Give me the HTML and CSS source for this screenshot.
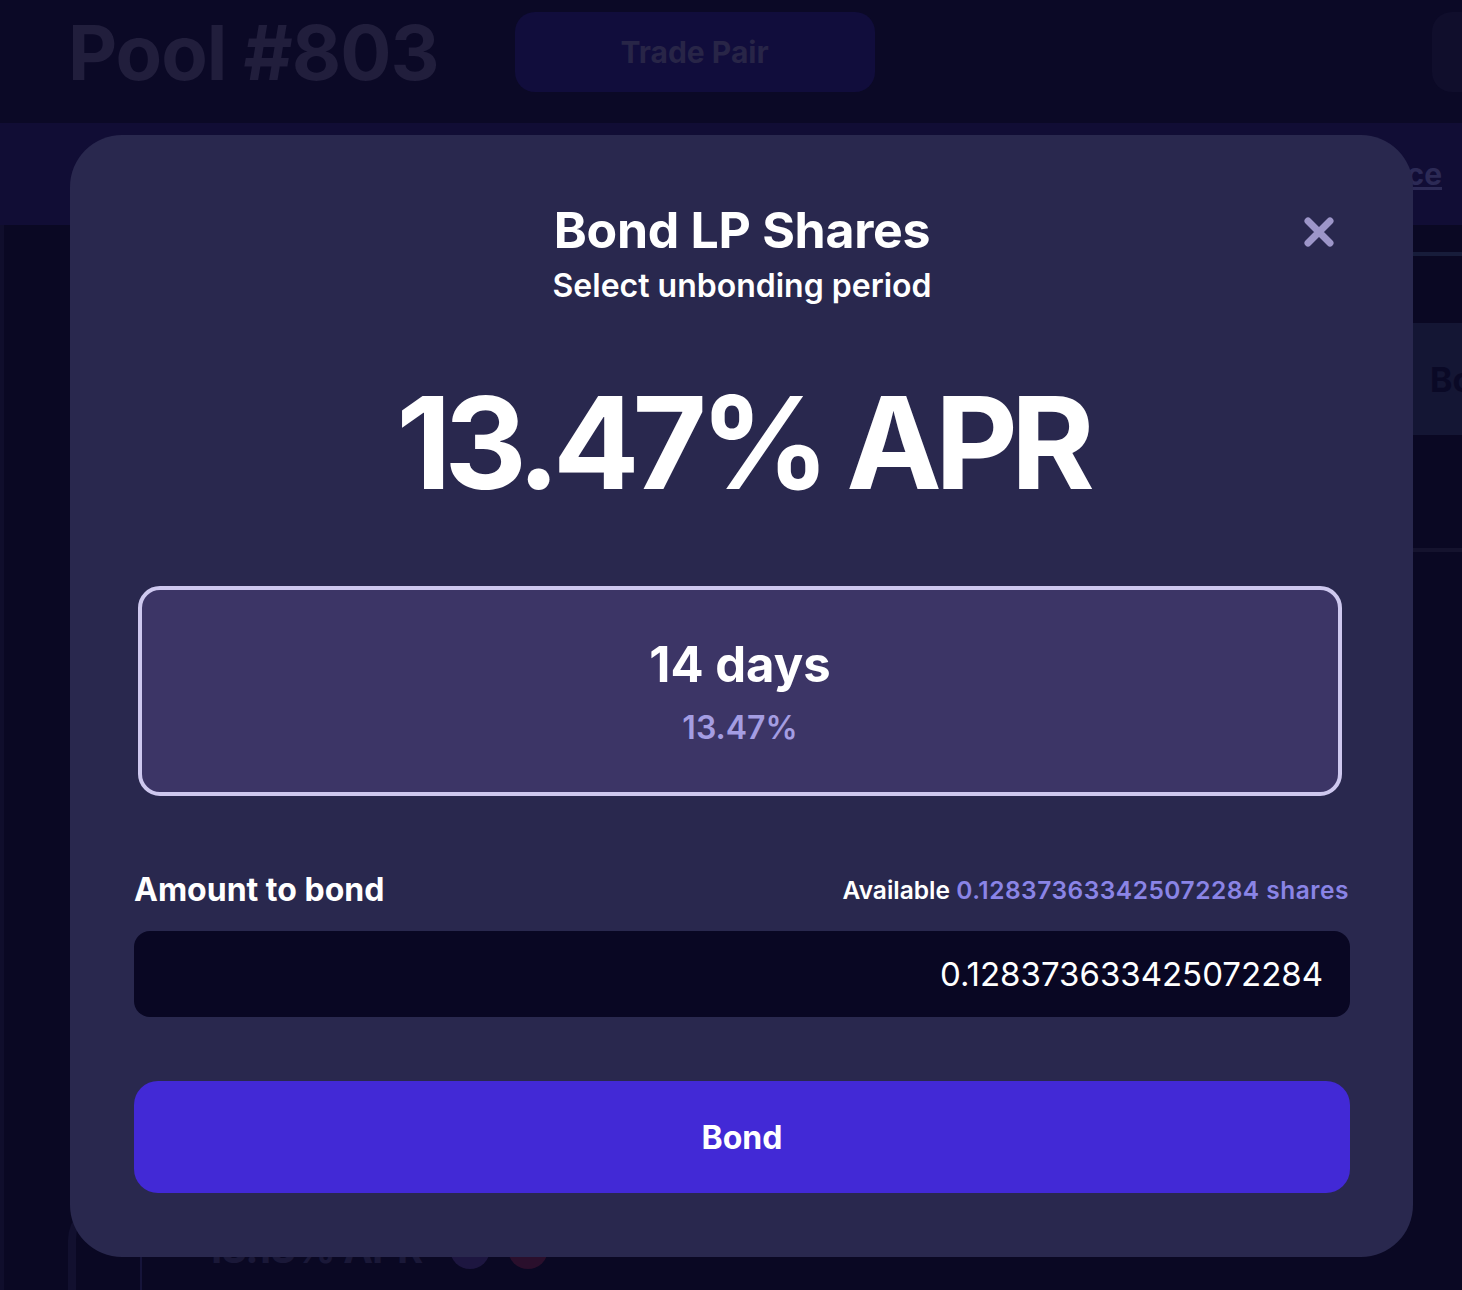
FILE: index.html
```html
<!DOCTYPE html>
<html lang="en">
<head>
    <meta charset="UTF-8">
    <meta name="viewport" content="width=device-width, initial-scale=1.0">
    <title>Pool #803 - Bond LP Shares</title>
    <link rel="stylesheet" href="styles.css">
</head>
<body>
    <header class="topbar">
        <h1 class="pool-title">Pool #803</h1>
        <button class="trade-btn">Trade Pair</button>
        <div class="topbar-spacer"></div>
        <button class="side-btn"></button>
    </header>

    <div class="tabs">
        <span class="tabs-link">Balance</span>
    </div>

    <div class="content">
        <div class="content-left">
            <div class="pool-card">
                <div class="bond-card">
                    <div class="bond-card-row">
                        <span class="bond-card-apr">13.13% APR</span>
                        <span class="dot dot-purple"></span>
                        <span class="dot dot-red"></span>
                    </div>
                </div>
            </div>
        </div>
        <div class="content-right">
            <div class="right-line"></div>
            <div class="right-box">Bond</div>
            <div class="right-line lower"></div>
        </div>
    </div>

    <!-- modal -->
    <div class="overlay">
        <div class="modal">
            <button class="close-btn" title="Close">
                <svg width="32" height="32" viewBox="0 0 32 32">
                    <path d="M5 5 L27 27 M27 5 L5 27" stroke="#9d96c9" stroke-width="7" stroke-linecap="round" fill="none"/>
                </svg>
            </button>
            <h2 class="modal-title">Bond LP Shares</h2>
            <div class="modal-subtitle">Select unbonding period</div>

            <div class="apr">13.47% APR</div>

            <div class="period selected">
                <div class="period-days">14 days</div>
                <div class="period-apr">13.47%</div>
            </div>

            <div class="amount-row">
                <label class="amount-label" for="amountInput">Amount to bond</label>
                <div class="available">Available <span class="available-value">0.128373633425072284 shares</span></div>
            </div>
            <input class="amount-input" id="amountInput" type="text" value="0.128373633425072284">

            <button class="bond-btn">Bond</button>
        </div>
    </div>
</body>
</html>
```

FILE: styles.css
```css
body {
    font-family: Inter, "Noto Sans", sans-serif;
    margin: 0;
    padding: 0;
    background-color: #0a0823;
    color: #fff;
    overflow: hidden;
}
.topbar {
    display: flex;
    align-items: center;
    height: 123px;
    padding: 0 0 19px 68px;
    gap: 76px;
    background-color: #0b0926;
    box-sizing: border-box;
}
.pool-title {
    margin: 0;
    font-size: 76px;
    font-weight: 700;
    color: #211e3c;
    letter-spacing: -1px;
}
.trade-btn {
    width: 360px;
    height: 80px;
    border: none;
    border-radius: 20px;
    background-color: #110d3c;
    color: #282547;
    font-family: inherit;
    font-size: 30px;
    font-weight: 700;
}
.topbar-spacer {
    flex: 1;
}
.side-btn {
    width: 60px;
    height: 80px;
    margin-right: -30px;
    border: none;
    border-radius: 20px;
    background-color: #100e2c;
}
.tabs {
    display: flex;
    justify-content: flex-end;
    align-items: center;
    height: 102px;
    padding-right: 20px;
    background-color: #110d35;
}
.tabs-link {
    font-size: 30px;
    font-weight: 700;
    color: #2c2a55;
    text-decoration: underline;
}
.content {
    display: flex;
    height: 1065px;
    overflow: hidden;
}
.content-left {
    flex-shrink: 0;
    width: 1404px;
    padding-top: 65px;
    border-left: 4px solid #100e2c;
}
.pool-card {
    height: 1000px;
    margin-left: 64px;
    border-left: 8px solid #12102f;
    border-top-left-radius: 40px;
}
.bond-card {
    margin: 910px 0 0 64px;
    height: 200px;
    padding: 27px 0 0 63px;
    border-top: 2px solid #16143a;
    border-left: 2px solid #16143a;
    border-top-left-radius: 40px;
}
.bond-card-row {
    display: flex;
    align-items: center;
    gap: 10px;
}
.bond-card-apr {
    margin-right: 18px;
    font-size: 40px;
    line-height: 40px;
    font-weight: 700;
    letter-spacing: -1px;
    color: #1a1838;
}
.dot {
    width: 40px;
    height: 40px;
    border-radius: 50%;
}
.dot-purple {
    background-color: #1d1640;
}
.dot-red {
    margin-left: 8px;
    background-color: #2a0f2c;
}
.content-right {
    flex: 1;
    padding-top: 27px;
}
.right-line {
    height: 4px;
    background-color: #171c3a;
}
.right-line.lower {
    margin-top: 113px;
    background-color: #15132e;
}
.right-box {
    margin-top: 67px;
    height: 112px;
    padding-left: 22px;
    display: flex;
    align-items: center;
    background-color: #141634;
    color: #0a0926;
    font-size: 34px;
    font-weight: 700;
}
.overlay {
    position: fixed;
    top: 0;
    left: 0;
    right: 0;
    bottom: 0;
    padding: 135px 0 0 70px;
}
.modal {
    position: relative;
    width: 1343px;
    height: 1122px;
    box-sizing: border-box;
    padding: 64px 63px 64px 64px;
    background-color: #29284e;
    border-radius: 52px;
    display: flex;
    flex-direction: column;
    align-items: center;
}
.close-btn {
    position: absolute;
    top: 81px;
    right: 78px;
    padding: 0;
    border: none;
    background: none;
    cursor: pointer;
}
.close-btn svg {
    display: block;
}
.modal-title {
    margin: 0;
    font-size: 50px;
    font-weight: 700;
    line-height: 62px;
    letter-spacing: -0.3px;
}
.modal-subtitle {
    margin-top: 5px;
    font-size: 32px;
    font-weight: 600;
    line-height: 40px;
}
.apr {
    margin-top: 73px;
    font-size: 128px;
    font-weight: 700;
    line-height: 128px;
    letter-spacing: -7px;
    padding-right: 7px;
    margin-left: 7px;
}
.period {
    margin-top: 79px;
    width: 1204px;
    height: 211px;
    box-sizing: border-box;
    margin-left: -4px;
    border: 4px solid #cec8ef;
    border-radius: 22px;
    background-color: #3c3566;
    display: flex;
    flex-direction: column;
    align-items: center;
    justify-content: center;
    gap: 13px;
}
.period-days {
    font-size: 49px;
    font-weight: 700;
    line-height: 60px;
}
.period-apr {
    font-size: 32px;
    font-weight: 600;
    line-height: 40px;
    color: #a49de2;
}
.amount-row {
    width: 100%;
    margin-top: 74px;
    display: flex;
    justify-content: space-between;
    align-items: center;
}
.amount-label {
    font-size: 32px;
    font-weight: 700;
}
.available {
    font-size: 24.5px;
    font-weight: 600;
    margin-right: 1px;
}
.available-value {
    color: #8a84e6;
    letter-spacing: 0.5px;
}
.amount-input {
    width: 100%;
    height: 86px;
    margin-top: 22px;
    box-sizing: border-box;
    padding: 0 27px;
    border: none;
    outline: none;
    border-radius: 16px;
    background-color: #090723;
    color: #fff;
    font-family: inherit;
    font-size: 33px;
    text-align: right;
}
.bond-btn {
    width: 100%;
    height: 112px;
    margin-top: 64px;
    border: none;
    border-radius: 24px;
    background-color: #4229d6;
    color: #fff;
    font-family: inherit;
    font-size: 32px;
    font-weight: 700;
    cursor: pointer;
}
```
